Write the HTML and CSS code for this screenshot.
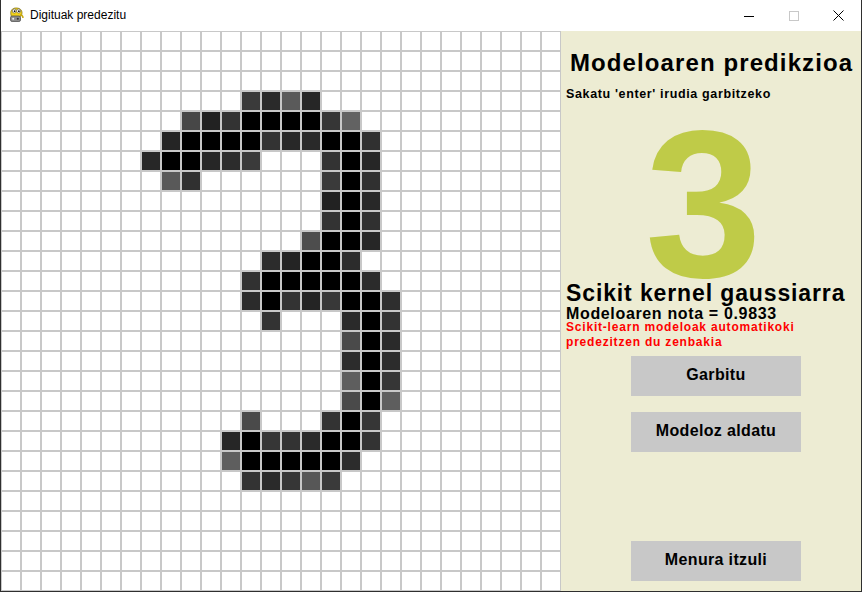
FILE: index.html
```html
<!DOCTYPE html>
<html lang="eu">
<head>
<meta charset="utf-8">
<title>Digituak predezitu</title>
<link rel="stylesheet" href="styles.css">
<script src="script.js" defer></script>
</head>
<body>
<div class="window">
  <div class="titlebar">
    <svg class="app-icon" width="17" height="17" viewBox="0 0 17 17">
      <path d="M3 9 C2 5 4 2 8 2 C12 2 14 4 14 7 C14 10 12 11 10 11 L6 11 C4 11 3 10 3 9 Z" fill="#f2d21b" stroke="#8a7a10" stroke-width="0.8"/>
      <circle cx="6.3" cy="5" r="2" fill="#fff" stroke="#555" stroke-width="0.6"/>
      <circle cx="10.6" cy="5" r="2" fill="#fff" stroke="#555" stroke-width="0.6"/>
      <circle cx="6.6" cy="5.2" r="0.9" fill="#111"/>
      <circle cx="10.9" cy="5.2" r="0.9" fill="#111"/>
      <rect x="2.5" y="10" width="10" height="5.5" rx="1.6" fill="#8c8c8c" stroke="#444" stroke-width="0.7"/>
      <circle cx="5.2" cy="12.7" r="1" fill="#eee"/>
      <circle cx="9.8" cy="12.7" r="1" fill="#333"/>
      <path d="M12 9 C14 9 15 10 15 12" stroke="#c9a90f" stroke-width="1.4" fill="none"/>
    </svg>
    <span class="title-text">Digituak predezitu</span>
    <div class="controls">
      <span class="ctl ctl-min"><svg width="10" height="10" viewBox="0 0 10 10"><path d="M0 5.5 H10" stroke="#000" stroke-width="1"/></svg></span>
      <span class="ctl ctl-max"><svg width="10" height="10" viewBox="0 0 10 10"><rect x="0.5" y="0.5" width="9" height="9" fill="none" stroke="#c8c8c8" stroke-width="1"/></svg></span>
      <span class="ctl ctl-close"><svg width="11" height="11" viewBox="0 0 11 11"><path d="M0.5 0.5 L10.5 10.5 M10.5 0.5 L0.5 10.5" stroke="#000" stroke-width="1"/></svg></span>
    </div>
  </div>
  <div class="client">
    <div class="grid" id="grid"></div>
    <div class="panel">
      <div class="p-title">Modeloaren predikzioa</div>
      <div class="p-sub">Sakatu 'enter' irudia garbitzeko</div>
      <div class="p-digit">3</div>
      <div class="p-model">Scikit kernel gaussiarra</div>
      <div class="p-score">Modeloaren nota = 0.9833</div>
      <div class="p-note">Scikit-learn modeloak automatikoki<br>predezitzen du zenbakia</div>
      <div class="btn btn-clear">Garbitu</div>
      <div class="btn btn-change">Modeloz aldatu</div>
      <div class="btn btn-menu">Menura itzuli</div>
    </div>
  </div>
</div>
</body>
</html>
```
FILE: styles.css
```css
html, body {
  margin: 0;
  padding: 0;
  background: #ffffff;
}

.window {
  width: 862px;
  height: 592px;
  box-sizing: border-box;
  border-left: 1px solid #2f2f2f;
  border-right: 1px solid #2f2f2f;
  border-bottom: 1px solid #2f2f2f;
  display: flex;
  flex-direction: column;
  overflow: hidden;
}

.titlebar {
  height: 31px;
  flex: 0 0 31px;
  background: #ffffff;
  display: flex;
  align-items: flex-start;
}

.app-icon {
  margin: 6px 0 0 7px;
  flex: 0 0 auto;
}

.title-text {
  margin: 8px 0 0 5px;
  font-family: "Liberation Sans", Arial, sans-serif;
  font-size: 12px;
  line-height: 14px;
  color: #000;
}

.controls {
  margin-left: auto;
  display: flex;
  height: 31px;
}

.ctl {
  width: 45px;
  height: 31px;
  display: flex;
  align-items: center;
  justify-content: center;
}

.ctl svg {
  display: block;
}

.client {
  display: flex;
  flex: 1 1 auto;
}

.grid {
  display: grid;
  grid-template-columns: repeat(28, 20px);
  grid-auto-rows: 20px;
  width: 560px;
  height: 560px;
  flex: 0 0 560px;
}

.cell {
  box-sizing: border-box;
  border: 1px solid #c8c8c8;
  background: #ffffff;
}

.panel {
  flex: 1 1 auto;
  background: #edecd3;
  padding-top: 20px;
  font-family: "Liberation Sans", Arial, sans-serif;
  font-weight: bold;
  color: #000;
  display: flex;
  flex-direction: column;
}

.p-title {
  font-size: 24px;
  line-height: 24px;
  letter-spacing: 1.1px;
  padding-left: 9px;
  white-space: nowrap;
}

.p-sub {
  margin-top: 12px;
  font-size: 12.5px;
  line-height: 14px;
  letter-spacing: 0.64px;
  padding-left: 5px;
  white-space: nowrap;
}

.p-digit {
  margin-top: 29px;
  font-size: 210px;
  line-height: 150px;
  height: 150px;
  color: #bfcb48;
  padding-left: 84px;
}

.p-model {
  margin-top: 3px;
  font-size: 23px;
  line-height: 20px;
  letter-spacing: 0.88px;
  padding-left: 5px;
  white-space: nowrap;
}

.p-score {
  margin-top: 4px;
  font-size: 16px;
  line-height: 13px;
  letter-spacing: 0.65px;
  padding-left: 5px;
  white-space: nowrap;
}

.p-note {
  font-size: 12px;
  line-height: 15px;
  letter-spacing: 0.8px;
  color: #ff0000;
  padding-left: 5px;
  white-space: nowrap;
}

.btn {
  width: 170px;
  height: 40px;
  margin-left: 70px;
  background: #c8c8c8;
  display: flex;
  align-items: center;
  justify-content: center;
  font-size: 16px;
  letter-spacing: 0.35px;
  line-height: 18px;
  padding-bottom: 3px;
  box-sizing: border-box;
}

.btn-clear {
  margin-top: 6px;
}

.btn-change {
  margin-top: 16px;
}

.btn-menu {
  margin-top: 89px;
}
```
FILE: script.js
```js
(function () {
  var data = {
    3: {12: 0x3a, 13: 0x2a, 14: 0x5a, 15: 0x26},
    4: {9: 0x47, 10: 0x22, 11: 0x33, 12: 0, 13: 0, 14: 0, 15: 0, 16: 0x36, 17: 0x62},
    5: {8: 0x25, 9: 0, 10: 0, 11: 0, 12: 0, 13: 0x33, 14: 0x28, 15: 0x29, 16: 0, 17: 0, 18: 0x30},
    6: {7: 0x27, 8: 0, 9: 0, 10: 0x26, 11: 0x2c, 12: 0x3a, 16: 0x33, 17: 0, 18: 0x26},
    7: {8: 0x59, 9: 0x30, 16: 0x3a, 17: 0, 18: 0x30},
    8: {16: 0x22, 17: 0, 18: 0x28},
    9: {16: 0x33, 17: 0, 18: 0x30},
    10: {15: 0x4d, 16: 0, 17: 0, 18: 0x26},
    11: {13: 0x2c, 14: 0x24, 15: 0, 16: 0, 17: 0x2c},
    12: {12: 0x31, 13: 0, 14: 0, 15: 0, 16: 0, 17: 0, 18: 0x2b},
    13: {12: 0x2b, 13: 0, 14: 0x33, 15: 0x24, 16: 0x38, 17: 0, 18: 0, 19: 0x2e},
    14: {13: 0x33, 17: 0x2a, 18: 0, 19: 0x33},
    15: {17: 0x4a, 18: 0, 19: 0x2a},
    16: {17: 0x2c, 18: 0, 19: 0x2c},
    17: {17: 0x5e, 18: 0, 19: 0x36},
    18: {17: 0x4a, 18: 0, 19: 0x5e},
    19: {12: 0x4a, 16: 0x33, 17: 0, 18: 0x36},
    20: {11: 0x26, 12: 0, 13: 0x36, 14: 0x33, 15: 0x2a, 16: 0, 17: 0, 18: 0x33},
    21: {11: 0x5e, 12: 0, 13: 0, 14: 0, 15: 0, 16: 0, 17: 0x2c},
    22: {12: 0x33, 13: 0x2a, 14: 0x36, 15: 0x57, 16: 0x3a}
  };
  var grid = document.getElementById('grid');
  var frag = document.createDocumentFragment();
  for (var r = 0; r < 28; r++) {
    for (var c = 0; c < 28; c++) {
      var d = document.createElement('div');
      d.className = 'cell';
      if (data[r] && data[r][c] !== undefined) {
        var v = data[r][c];
        d.style.background = 'rgb(' + v + ',' + v + ',' + v + ')';
      }
      frag.appendChild(d);
    }
  }
  grid.appendChild(frag);
})();
```
